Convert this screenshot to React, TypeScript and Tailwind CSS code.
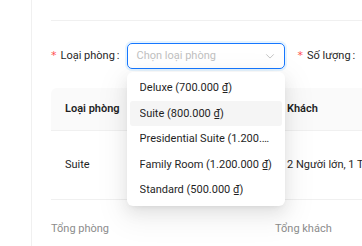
import React from 'react';

const options = [
  'Deluxe (700.000 ₫)',
  'Suite (800.000 ₫)',
  'Presidential Suite (1.200.000 ₫)',
  'Family Room (1.200.000 ₫)',
  'Standard (500.000 ₫)',
];

const App: React.FC = () => {
  return (
    <div className="relative w-[362px] h-[246px] overflow-hidden bg-white text-[11px] leading-[17.6px] text-[#1f1f1f] font-['Roboto',sans-serif]">
      <div className="flex h-full">
        <div className="w-[31px] shrink-0" />
        <div className="flex-1 border-l border-[#f0f0f0] pl-[19px] min-w-0 overflow-hidden">
          <div className="h-[20px]" />
          <div className="border-t border-[#f0f0f0]" />

          {/* form row */}
          <div className="flex items-center mt-[22px] h-[26px] whitespace-nowrap">
            <span className="text-[#ff4d4f] mr-[4px] text-[11px] font-['DejaVu_Sans',sans-serif]">*</span>
            <span>Loại phòng</span>
            <span className="ml-[2px] mr-[7px]">:</span>
            <div className="w-[158px] h-[26px] shrink-0 rounded-[5px] border border-[#1677ff] shadow-[0_0_0_2px_rgba(5,145,255,0.1)] flex items-center pl-[9px] pr-[9px]">
              <span className="flex-1 text-[#bfbfbf]">Chọn loại phòng</span>
              <svg width="10" height="10" viewBox="0 0 12 12" fill="none" stroke="#bfbfbf" strokeWidth="1.1">
                <path d="M1.5 4l4.5 4.5L10.5 4" />
              </svg>
            </div>
            <span className="text-[#ff4d4f] ml-[13px] mr-[4px] text-[11px] font-['DejaVu_Sans',sans-serif]">*</span>
            <span>Số lượng</span>
            <span className="ml-[2px]">:</span>
          </div>

          {/* table */}
          <div className="mt-[19px]">
            <div className="flex h-[43px] items-center bg-[#fafafa] rounded-tl-[6px] border-b border-[#f0f0f0] font-semibold whitespace-nowrap">
              <div className="w-[223px] shrink-0 pl-[14px]">Loại phòng</div>
              <div className="pl-[13px]">Khách</div>
            </div>
            <div className="flex h-[69px] items-center border-b border-[#f0f0f0] whitespace-nowrap">
              <div className="w-[223px] shrink-0 pl-[14px]">Suite</div>
              <div className="pl-[13px]">2 Người lớn, 1 Trẻ em</div>
            </div>
          </div>

          <div className="flex mt-[20px] text-[#8c8c8c] whitespace-nowrap">
            <div className="w-[224px] shrink-0">Tổng phòng</div>
            <div>Tổng khách</div>
          </div>
        </div>
      </div>

      {/* dropdown */}
      <div className="absolute left-[127px] top-[72px] w-[158px] rounded-[6px] bg-white p-[3px] shadow-[0_6px_16px_0_rgba(0,0,0,0.08),0_3px_6px_-4px_rgba(0,0,0,0.12),0_9px_28px_8px_rgba(0,0,0,0.05)]">
        {options.map((o, i) => (
          <div
            key={o}
            className={`h-[25.6px] flex items-center px-[9.6px] rounded-[3px] whitespace-nowrap ${i === 1 ? 'bg-[#f5f5f5]' : ''}`}
          >
            <span className="truncate">{o}</span>
          </div>
        ))}
      </div>
    </div>
  );
};

export default App;
